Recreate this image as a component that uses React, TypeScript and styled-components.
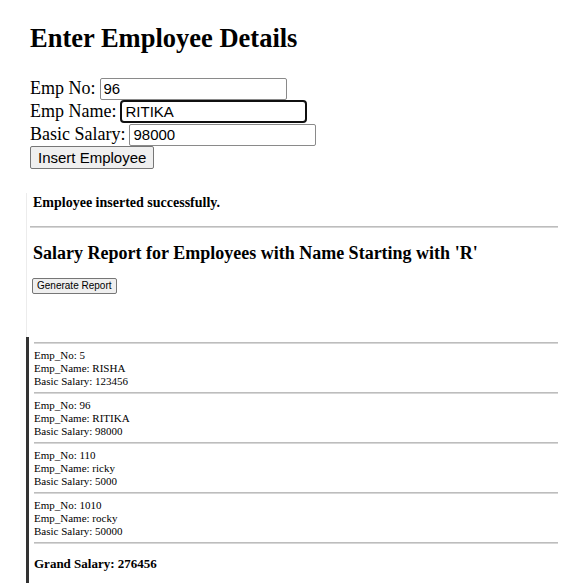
import React from "react";
import styled, { createGlobalStyle } from "styled-components";

const GlobalStyle = createGlobalStyle`
  body {
    margin: 0;
    background: #ffffff;
    color: #000000;
    font-family: "Liberation Serif", "Times New Roman", serif;
  }
`;

const Page = styled.div`
  padding: 0 27px 0 26px;
`;

const Title = styled.h1`
  margin: 23px 0 0 4px;
  font-size: 26.5px;
  line-height: 30px;
  font-weight: bold;
`;

const Form = styled.form`
  margin: 24px 0 0 4px;
  display: flex;
  flex-direction: column;
  align-items: flex-start;
`;

const FieldRow = styled.div`
  display: flex;
  align-items: center;
  gap: 4px;
  height: 23px;
`;

const Label = styled.label`
  font-size: 18px;
  line-height: 23px;
`;

const Input = styled.input<{ $focused?: boolean }>`
  box-sizing: border-box;
  width: 187px;
  height: ${(p) => (p.$focused ? "23px" : "22px")};
  padding: 1px 3px;
  border: ${(p) => (p.$focused ? "2px solid #101010" : "1px solid #8a8a8a")};
  border-radius: ${(p) => (p.$focused ? "4px" : "2px")};
  font-family: "Liberation Sans", Arial, sans-serif;
  font-size: 15px;
  color: #000;
  background: #fff;
  outline: none;
`;

const Button = styled.button<{ $small?: boolean }>`
  box-sizing: border-box;
  height: ${(p) => (p.$small ? "16px" : "23px")};
  padding: ${(p) => (p.$small ? "0 4px" : "0 7px")};
  border: 1px solid #767676;
  border-radius: 2px;
  background: #efefef;
  color: #000;
  font-family: "Liberation Sans", Arial, sans-serif;
  font-size: ${(p) => (p.$small ? "10px" : "15px")};
  line-height: 1;
  cursor: pointer;
`;

const Section = styled.section`
  margin-top: 24px;
  border-left: 1px solid #ececec;
  padding: 2px 0 0 3px;
  height: 142px;
`;

const Message = styled.p`
  margin: 0 0 0 3px;
  font-size: 14px;
  line-height: 16px;
  font-weight: bold;
`;

const Rule = styled.hr`
  margin: 0;
  height: 0;
  border: none;
  border-top: 1px solid #bdbdbd;
  border-bottom: 1px solid #d6d6d6;
`;

const SectionRule = styled(Rule)`
  margin-top: 15px;
`;

const ReportTitle = styled.h2`
  margin: 14px 0 0 3px;
  font-size: 18px;
  line-height: 23px;
  font-weight: bold;
`;

const ReportButtonWrap = styled.div`
  margin: 10px 0 0 2px;
`;

const Report = styled.div`
  border-left: 3px solid #333333;
  padding: 5px 0 14px 5px;
`;

const Record = styled.div`
  padding: 5px 0 4px 0;
  font-size: 11px;
  line-height: 13px;
`;

const Grand = styled.p`
  margin: 12px 0 0 0;
  font-size: 13px;
  line-height: 15px;
  font-weight: bold;
`;

const employees = [
  { no: 5, name: "RISHA", salary: 123456 },
  { no: 96, name: "RITIKA", salary: 98000 },
  { no: 110, name: "ricky", salary: 5000 },
  { no: 1010, name: "rocky", salary: 50000 },
];

export default function App() {
  const total = employees.reduce((s, e) => s + e.salary, 0);
  return (
    <Page>
      <GlobalStyle />
      <Title>Enter Employee Details</Title>
      <Form onSubmit={(e) => e.preventDefault()}>
        <FieldRow>
          <Label>Emp No:</Label>
          <Input defaultValue="96" />
        </FieldRow>
        <FieldRow>
          <Label>Emp Name:</Label>
          <Input $focused defaultValue="RITIKA" />
        </FieldRow>
        <FieldRow>
          <Label>Basic Salary:</Label>
          <Input defaultValue="98000" />
        </FieldRow>
        <Button type="submit">Insert Employee</Button>
      </Form>
      <Section>
        <Message>Employee inserted successfully.</Message>
        <SectionRule />
        <ReportTitle>Salary Report for Employees with Name Starting with 'R'</ReportTitle>
        <ReportButtonWrap>
          <Button $small type="button">Generate Report</Button>
        </ReportButtonWrap>
      </Section>
      <Report>
        {employees.map((e) => (
          <React.Fragment key={e.no}>
            <Rule />
            <Record>
              Emp_No: {e.no}
              <br />
              Emp_Name: {e.name}
              <br />
              Basic Salary: {e.salary}
            </Record>
          </React.Fragment>
        ))}
        <Rule />
        <Grand>Grand Salary: {total}</Grand>
      </Report>
    </Page>
  );
}
